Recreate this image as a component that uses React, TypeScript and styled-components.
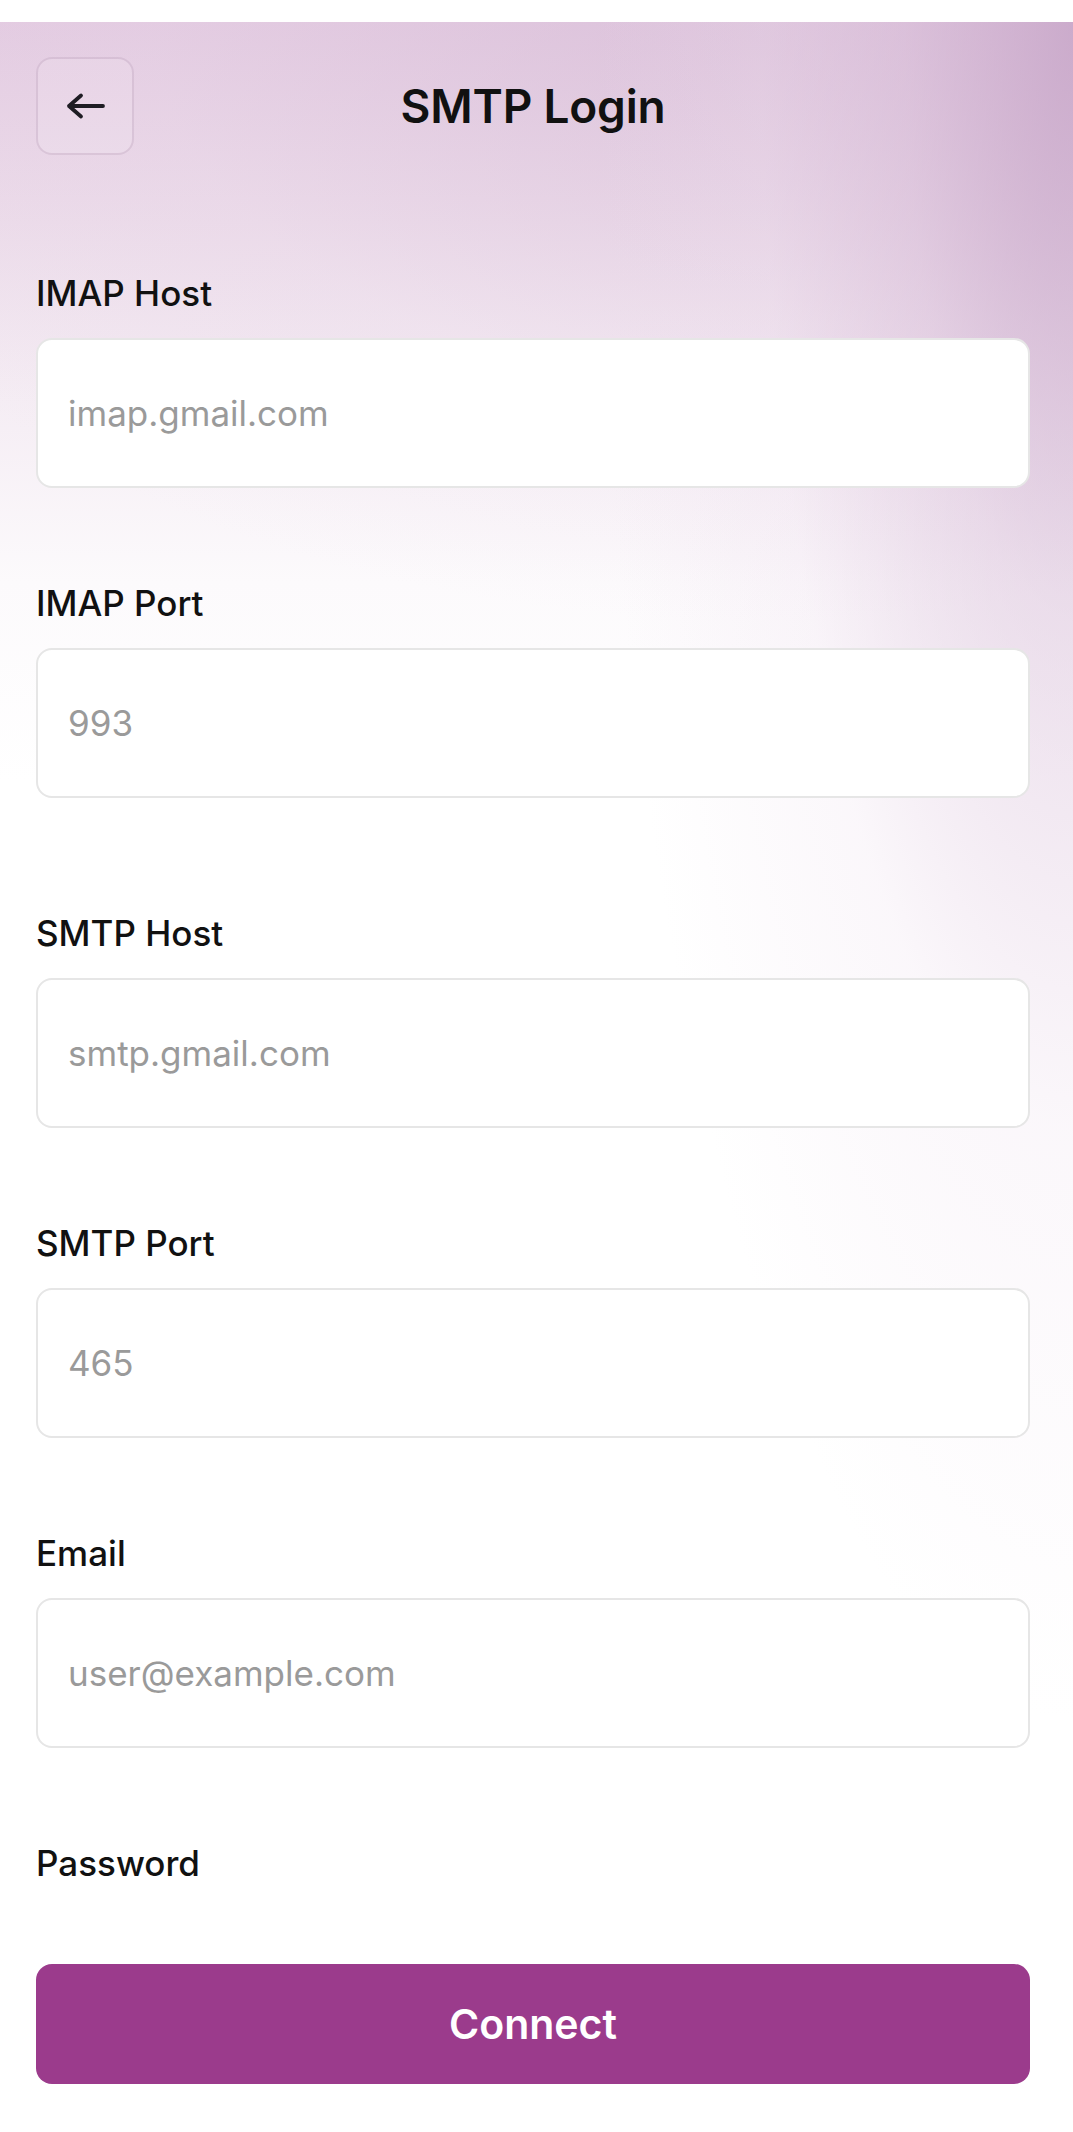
import React, { FC, ReactElement } from 'react'
import styled, { createGlobalStyle } from 'styled-components'

const GlobalStyle = createGlobalStyle`
  html, body {
    margin: 0;
    padding: 0;
    background: #fff;
  }
  body {
    font-family: Inter, 'Noto Sans', 'Liberation Sans', sans-serif;
    color: #111;
    -webkit-font-smoothing: antialiased;
  }
  * {
    box-sizing: border-box;
  }
`

const Screen = styled.div`
  padding-top: 22px;
  background: #fff;
  min-height: 100vh;
`

const Backdrop = styled.main`
  min-height: calc(100vh - 22px);
  padding: 35px 43px 40px 36px;
  background:
    radial-gradient(ellipse 480px 1700px at 100% 0%, rgba(198, 164, 199, 0.8) 0%, rgba(214, 186, 214, 0.45) 35%, rgba(236, 220, 236, 0.22) 65%, rgba(255, 255, 255, 0) 100%),
    radial-gradient(ellipse 1000px 600px at 70% 0%, rgba(212, 184, 212, 0.45) 0%, rgba(230, 210, 230, 0.18) 60%, rgba(255, 255, 255, 0) 100%),
    linear-gradient(180deg, #e3cbe1 0px, #ecdcea 200px, #f5edf4 380px, #fcfafc 560px, #ffffff 760px);
`

const Header = styled.header`
  display: grid;
  grid-template-columns: 98px 1fr 98px;
  align-items: center;
  height: 98px;
`

const BackButton = styled.button`
  width: 98px;
  height: 98px;
  display: flex;
  align-items: center;
  justify-content: center;
  padding: 0;
  border: 2px solid rgba(140, 100, 140, 0.18);
  border-radius: 16px;
  background: rgba(255, 255, 255, 0.12);
  cursor: pointer;
`

const Title = styled.h1`
  margin: 0;
  text-align: center;
  font-size: 46px;
  font-weight: 600;
  letter-spacing: -0.2px;
  color: #111;
`

const Form = styled.form`
  display: flex;
  flex-direction: column;
  margin-top: 117px;
`

const Section = styled.div`
  display: flex;
  flex-direction: column;
  gap: 94px;

  & + & {
    margin-top: 114px;
  }
`

const Field = styled.div`
  display: flex;
  flex-direction: column;
  gap: 24px;
`

const Label = styled.label`
  font-size: 35px;
  line-height: 42px;
  font-weight: 500;
  color: #111;
`

const Input = styled.input`
  height: 150px;
  width: 100%;
  padding: 0 30px;
  border: 2px solid #e6e6e6;
  border-radius: 16px;
  background: #fff;
  font-family: inherit;
  font-size: 35px;
  color: #111;
  outline: none;

  &::placeholder {
    color: #9a9a9a;
  }
`

const ConnectButton = styled.button`
  margin-top: 80px;
  height: 120px;
  width: 100%;
  border: none;
  border-radius: 16px;
  background: #9b3b8c;
  color: #fff;
  font-family: inherit;
  font-size: 41px;
  font-weight: 600;
  cursor: pointer;
`

const ArrowLeft = () => (
  <svg width='40' height='28' viewBox='0 0 40 28' fill='none'>
    <path
      d='M38 14H4M16 3.5L4 14l12 10.5'
      stroke='#1f1d24'
      strokeWidth='3.8'
      strokeLinecap='round'
      strokeLinejoin='round'
    />
  </svg>
)

type FieldProps = { label: string; placeholder?: string; type?: string; noInput?: boolean }

const FormField = ({ label, placeholder, type = 'text', noInput }: FieldProps) => (
  <Field>
    <Label>{label}</Label>
    {!noInput && <Input type={type} placeholder={placeholder} />}
  </Field>
)

const App: FC = (): ReactElement => {
  return (
    <Screen>
      <GlobalStyle />
      <Backdrop>
        <Header>
          <BackButton type='button' aria-label='Back'>
            <ArrowLeft />
          </BackButton>
          <Title>SMTP Login</Title>
          <span />
        </Header>
        <Form onSubmit={(e) => e.preventDefault()}>
          <Section>
            <FormField label='IMAP Host' placeholder='imap.gmail.com' />
            <FormField label='IMAP Port' placeholder='993' />
          </Section>
          <Section>
            <FormField label='SMTP Host' placeholder='smtp.gmail.com' />
            <FormField label='SMTP Port' placeholder='465' />
            <FormField label='Email' placeholder='user@example.com' type='email' />
            <FormField label='Password' noInput />
          </Section>
          <ConnectButton type='submit'>Connect</ConnectButton>
        </Form>
      </Backdrop>
    </Screen>
  )
}

export default App
